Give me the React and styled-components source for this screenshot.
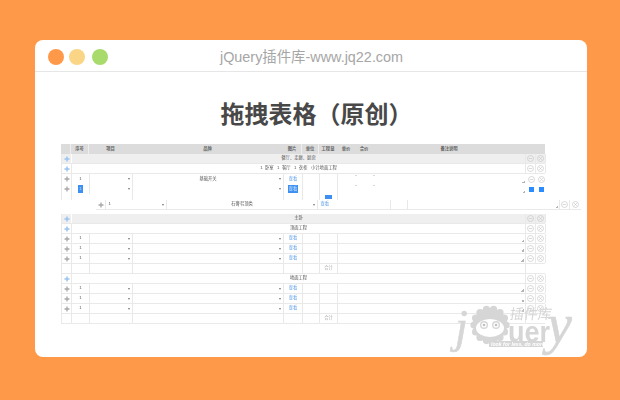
import React from 'react'
import styled, { createGlobalStyle } from 'styled-components'

const CJK = `"Liberation Sans", "Noto Sans CJK SC", sans-serif`
const LINE = '#e9e9e9'
const MARK = '#d6d6d6'

const GlobalStyle = createGlobalStyle`
  html, body { margin: 0; padding: 0; }
  body { background: #ff994a; font-family: ${CJK}; }
`

const Page = styled.div`
  width: 620px;
  height: 400px;
  box-sizing: border-box;
  padding: 40px 33px 43px 35px;
`

const Card = styled.div`
  position: relative;
  height: 100%;
  background: #fff;
  border-radius: 8px;
  overflow: hidden;
`

const TitleBar = styled.div`
  position: relative;
  height: 32px;
  box-sizing: border-box;
  border-bottom: 1px solid #e6e6e6;
  display: flex;
  align-items: center;
  justify-content: center;
  color: #a6a6a6;
  font-size: 14.4px;
  padding: 0 0 1px 1px;
`

const Dots = styled.div`
  position: absolute;
  left: 13px;
  top: 9px;
  display: flex;
  gap: 5px;
`

const Dot = styled.span`
  width: 16px;
  height: 16px;
  border-radius: 50%;
  background: ${p => p.$color};
  margin-left: ${p => p.$gap || 0}px;
`

const Heading = styled.h1`
  margin: 0;
  height: 72px;
  display: flex;
  align-items: center;
  justify-content: center;
  color: #484848;
  font-size: 24px;
  font-weight: 700;
  font-family: "Noto Sans CJK SC", sans-serif;
  padding: 8px 0 0 11px;
  box-sizing: border-box;
`

const Sheet = styled.div`
  margin-left: 26px;
  width: 484px;
  filter: blur(0.45px);
  font-size: 4.3px;
  line-height: 1;
  color: #555;
`

const Row = styled.div`
  display: grid;
  grid-template-columns: ${p => p.$columns || '10px 18px 43px 151px 19px 17px 18px 18px 18px 152px 10px 10px'};
  height: ${p => p.$height || 10}px;
  box-sizing: border-box;
  background: ${p => p.$bg || 'transparent'};
  border-bottom: ${p => (p.$plain ? 'none' : `1px solid ${LINE}`)};
  border-left: ${p => (p.$open ? 'none' : `1px solid ${LINE}`)};
  margin: ${p => p.$margin || '0'};
`

const Cell = styled.div`
  position: relative;
  display: flex;
  align-items: center;
  justify-content: ${p => p.$align || 'center'};
  border-right: ${p => (p.$line ? `1px solid ${p.$lineColor || LINE}` : 'none')};
  grid-column: ${p => p.$span || 'auto'};
  color: ${p => p.$color || 'inherit'};
  white-space: pre;
  min-width: 0;
`

const HeadRow = styled(Row)`
  background: #dcdcdc;
  border: none;
  color: #666;
  font-weight: 700;
`

const Arrow = styled.span`
  position: absolute;
  right: 2px;
  top: 4px;
  width: 0;
  height: 0;
  border-left: 1px solid transparent;
  border-right: 1px solid transparent;
  border-top: 2px solid #777;
`

const Grip = styled.span`
  position: absolute;
  right: 1px;
  bottom: 1px;
  width: 3px;
  height: 3px;
  background: linear-gradient(135deg, transparent 50%, #b4b4b4 50%);
`

const Tick = styled.span`
  position: absolute;
  right: -1px;
  top: ${p => p.$top || 0}px;
  width: 2px;
  height: 1px;
  background: #d8d8d8;
`

const Link = styled.span`
  color: #5a9de6;
`

const Selected = styled.span`
  background: #3d8ff0;
  color: #d5e8ff;
  padding: ${p => p.$pad || '2px 1px'};
`

const Square = styled.span`
  width: 5px;
  height: 5px;
  background: #2a8cff;
`

const Watermark = styled.div`
  position: absolute;
  left: 412px;
  top: 262px;
  width: 135px;
  height: 48px;
  color: ${MARK};
`

const ScriptLetter = styled.span`
  position: absolute;
  left: ${p => p.$left}px;
  top: ${p => p.$top}px;
  font: italic 400 ${p => p.$size}px "Liberation Serif", serif;
  line-height: 1;
  -webkit-text-stroke: 0.6px ${MARK};
`

const BoldLetters = styled.span`
  position: absolute;
  left: 61px;
  top: 20px;
  font: 700 30px "Liberation Sans", sans-serif;
  line-height: 19px;
  transform: scaleX(0.9);
  transform-origin: left;
`

const CnMark = styled.span`
  position: absolute;
  left: 63px;
  top: 4px;
  font-size: 14px;
  line-height: 1;
  font-family: "Noto Sans CJK SC", sans-serif;
  transform: skewX(-8deg);
`

const Slogan = styled.span`
  position: absolute;
  left: 43px;
  top: 39px;
  padding: 0 1px;
  color: #fff;
  font: italic 700 5.2px "Liberation Sans", sans-serif;
  line-height: 6px;
  white-space: nowrap;
`

const SloganBar = styled.span`
  position: absolute;
  left: 42px;
  top: 39px;
  width: 54px;
  height: 6px;
  background: ${MARK};
`

const SheepBox = styled.svg`
  position: absolute;
  left: 23px;
  top: 3px;
`

const Drag = ({ blue }) => (
  <svg width="6" height="6" viewBox="0 0 7 7">
    {blue
      ? <path d="M2.6 0.5h1.8v2.1h2.1v1.8H4.4v2.1H2.6V4.4H0.5V2.6h2.1z" fill="#9cc4ee" />
      : <path d="M3.5 0.3l1.1 1.2H4v1.5h1.5v-.6l1.2 1.1-1.2 1.1V4H4v1.5h.6L3.5 6.7 2.4 5.5H3V4H1.5v.6L.3 3.5l1.2-1.1V3H3V1.5h-.6z" fill="#8f8f8f" />}
  </svg>
)

const Round = ({ kind }) => (
  <svg width="7" height="7" viewBox="0 0 7 7" fill="none" stroke="#c8c8c8" strokeWidth="0.7">
    <circle cx="3.5" cy="3.5" r="3" />
    {kind === 'minus'
      ? <path d="M1.8 3.5h3.4" />
      : <path d="M2.2 2.2l2.6 2.6M4.8 2.2L2.2 4.8" />}
  </svg>
)

const Actions = ({ line = true, filled }) => (
  <>
    <Cell $line={line}>{filled ? <Square /> : <Round kind="minus" />}</Cell>
    <Cell $line={line}>{filled ? <Square /> : <Round kind="plus" />}</Cell>
  </>
)

const Section = ({ label }) => (
  <Row $bg="#efefef">
    <Cell $line $lineColor="#fff"><Drag blue /></Cell>
    <Cell $span="2 / 11" $line>{label}</Cell>
    <Actions />
  </Row>
)

const Sub = ({ label }) => (
  <Row>
    <Cell $line><Drag blue /></Cell>
    <Cell $span="2 / 11" $line>{label}</Cell>
    <Actions />
  </Row>
)

const Item = ({ selected, plain, ticks }) => (
  <Row $plain={plain}>
    <Cell $line><Drag /></Cell>
    <Cell $line>{selected ? <Selected>1</Selected> : '1'}</Cell>
    <Cell $line><Arrow /></Cell>
    <Cell $line>{ticks === 'brand' && '基础开关'}<Arrow /></Cell>
    <Cell $line>{selected ? <Selected $pad="2px 1px">查看</Selected> : <Link>查看</Link>}</Cell>
    <Cell $line />
    <Cell $line />
    <Cell>{ticks && <Tick $top={1} />}</Cell>
    <Cell>{ticks && <Tick $top={1} />}</Cell>
    <Cell $line={!plain}><Grip /></Cell>
    <Actions line={!plain} filled={selected} />
  </Row>
)

const Total = () => (
  <Row>
    <Cell $line />
    <Cell $line />
    <Cell $line />
    <Cell $line />
    <Cell $line />
    <Cell $line />
    <Cell $line $color="#aaa">合计</Cell>
    <Cell $span="8 / 11" $line />
    <Cell $span="11 / 13" />
  </Row>
)

const Group = ({ label }) => (
  <>
    <Sub label={label} />
    <Item />
    <Item />
    <Item />
    <Total />
  </>
)

const Sheep = () => (
  <SheepBox width="40" height="40" viewBox="0 0 40 40">
    <circle cx="20" cy="20" r="17" fill={MARK} />
    {Array.from({ length: 14 }).map((_, i) => {
      const a = (i / 14) * Math.PI * 2
      return <circle key={i} cx={20 + 16 * Math.cos(a)} cy={20 + 16 * Math.sin(a)} r="3.6" fill={MARK} />
    })}
    <ellipse cx="20" cy="23" rx="14" ry="9" fill="#fff" />
    <circle cx="14" cy="20" r="4" fill={MARK} />
    <circle cx="26" cy="20" r="4" fill={MARK} />
    <circle cx="14" cy="20" r="2.6" fill="#fff" />
    <circle cx="26" cy="20" r="2.6" fill="#fff" />
    <circle cx="14" cy="20" r="1.3" fill="#c0c0c0" />
    <circle cx="26" cy="20" r="1.3" fill="#c0c0c0" />
  </SheepBox>
)

const App = () => (
  <Page>
    <GlobalStyle />
    <Card>
      <TitleBar>
        <Dots>
          <Dot $color="#ff994a" />
          <Dot $color="#fad585" />
          <Dot $color="#a9da6c" $gap={2} />
        </Dots>
        jQuery插件库-www.jq22.com
      </TitleBar>
      <Heading>拖拽表格（原创）</Heading>
      <Sheet>
        <HeadRow>
          <Cell $line $lineColor="#eee" />
          <Cell $line $lineColor="#eee">序号</Cell>
          <Cell>项目</Cell>
          <Cell>品牌</Cell>
          <Cell $line $lineColor="#eee">图片</Cell>
          <Cell $line $lineColor="#eee">单位</Cell>
          <Cell>工程量</Cell>
          <Cell>单价</Cell>
          <Cell>合价</Cell>
          <Cell>备注说明</Cell>
          <Cell />
          <Cell />
        </HeadRow>
        <Section label="餐厅、走廊、厨房" />
        <Sub label={'1  卧室   1  客厅   1  衣柜   小计地面工程'} />
        <Item plain ticks="brand" />
        <Item plain selected ticks="plain" />
        <Row $height={6} $plain>
          <Cell $line />
          <Cell />
          <Cell $line />
          <Cell $line />
          <Cell $line />
          <Cell $line />
          <Cell $line><Selected $pad="0 3px">&nbsp;</Selected></Cell>
        </Row>
        <Row
          $columns="10px 61px 151px 73px 17px 152px 10px 11px"
          $open
          $margin="0 -36px 4px 35px"
        >
          <Cell $line><Drag /></Cell>
          <Cell $line $align="flex-start">&nbsp;&nbsp;1<Arrow /></Cell>
          <Cell $line>石膏弔顶类<Arrow /></Cell>
          <Cell $line $align="flex-start">&nbsp;&nbsp;<Link>查看</Link></Cell>
          <Cell $line />
          <Cell $line><Grip /></Cell>
          <Cell $line><Round kind="minus" /></Cell>
          <Cell><Round kind="plus" /></Cell>
        </Row>
        <Section label="主卧" />
        <Group label="顶面工程" />
        <Group label="地面工程" />
      </Sheet>
      <Watermark>
        <ScriptLetter $left={8} $top={2} $size={46}>j</ScriptLetter>
        <Sheep />
        <CnMark>插件库</CnMark>
        <BoldLetters>uer</BoldLetters>
        <ScriptLetter $left={100} $top={-6} $size={56}>y</ScriptLetter>
        <SloganBar />
        <Slogan>look for less, do more</Slogan>
      </Watermark>
    </Card>
  </Page>
)

export default App
